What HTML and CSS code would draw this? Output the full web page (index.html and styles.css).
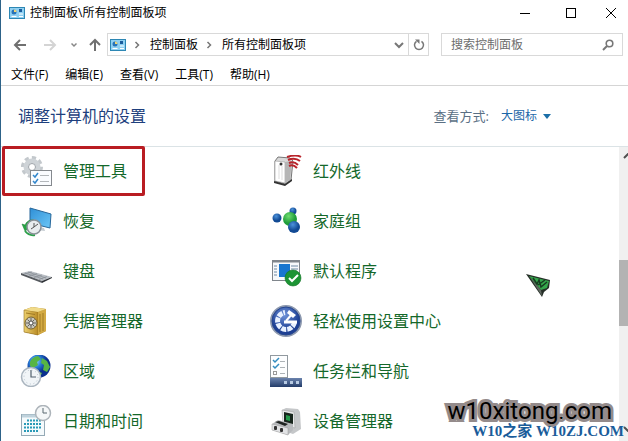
FILE: index.html
```html
<!DOCTYPE html>
<html lang="zh-CN">
<head>
    <meta charset="UTF-8">
    <meta name="viewport" content="width=device-width, initial-scale=1.0">
    <title>控制面板\所有控制面板项</title>
    <link rel="stylesheet" href="styles.css">
</head>
<body>

<!-- Shared symbols -->
<svg class="symbols" aria-hidden="true">
    <symbol id="panel" viewBox="0 0 16 12">
        <rect x="0.5" y="0.5" width="15" height="11" fill="#8fd0f2" stroke="#2d87b4"/>
        <circle cx="5" cy="5" r="2.5" fill="#2873b8"/>
        <path d="M5 5V2.5A2.5 2.5 0 0 1 7.5 5z" fill="#f4d774"/>
        <path d="M2.5 9.5h5M10 7h4M10 9.500h4" stroke="#fff"/>
        <rect x="10" y="2" width="3" height="3" fill="#1c5d9c"/>
    </symbol>
    <linearGradient id="gold" x2="1"><stop stop-color="#ecd06e"/><stop offset="1" stop-color="#b98b25"/></linearGradient>
    <linearGradient id="screen" x2="1" y2="1"><stop stop-color="#2f8fd6"/><stop offset="1" stop-color="#6cc7f7"/></linearGradient>
    <linearGradient id="bar" y2="1" x2="0"><stop stop-color="#6b83ad"/><stop offset="1" stop-color="#233c69"/></linearGradient>
    <radialGradient id="globe" cx="0.35" cy="0.3"><stop stop-color="#9be0ff"/><stop offset="0.5" stop-color="#2a7fd8"/><stop offset="1" stop-color="#0a2f8e"/></radialGradient>
    <radialGradient id="ease" cx="0.45" cy="0.3"><stop stop-color="#6f93da"/><stop offset="1" stop-color="#1d3f93"/></radialGradient>
    <radialGradient id="green" cx="0.4" cy="0.3"><stop stop-color="#6fdc70"/><stop offset="1" stop-color="#1f9c3a"/></radialGradient>
    <radialGradient id="blue" cx="0.4" cy="0.3"><stop stop-color="#4c93dc"/><stop offset="1" stop-color="#124a94"/></radialGradient>
</svg>

<div class="window">
    <!-- Title bar -->
    <header class="title-bar">
        <svg class="panel-icon"><use href="#panel"/></svg>
        <h1 class="title">控制面板\所有控制面板项</h1>
        <div class="window-buttons">
            <button aria-label="最小化"><svg width="12" height="12" viewBox="0 0 12 12"><path d="M1 6.500h10" stroke="#000"/></svg></button>
            <button aria-label="最大化"><svg width="12" height="12" viewBox="0 0 12 12"><rect x="1.500" y="1.500" width="9" height="9" fill="none" stroke="#000"/></svg></button>
            <button aria-label="关闭"><svg width="12" height="12" viewBox="0 0 12 12"><path d="M1 1l10 10M11 1L1 11" stroke="#000"/></svg></button>
        </div>
    </header>

    <!-- Navigation and search -->
    <div class="nav-bar">
        <div class="nav-buttons">
            <button class="nav-back" aria-label="后退"><svg width="14" height="12" viewBox="0 0 14 12"><path d="M13 6H2M7 1L2 6l5 5" fill="none" stroke="#707070" stroke-width="2"/></svg></button>
            <button class="nav-forward" aria-label="前进"><svg width="14" height="12" viewBox="0 0 14 12"><path d="M1 6h11M7 1l5 5-5 5" fill="none" stroke="#d4d4d4" stroke-width="2"/></svg></button>
            <button class="nav-recent" aria-label="最近"><svg width="6" height="6" viewBox="0 0 6 6"><path d="M0.500 1.500L3 4l2.500-2.500" fill="none" stroke="#888" stroke-width="1.500"/></svg></button>
            <button class="nav-up" aria-label="向上"><svg width="12" height="14" viewBox="0 0 12 14"><path d="M6 13V2M1 7l5-5 5 5" fill="none" stroke="#707070" stroke-width="2"/></svg></button>
        </div>
        <nav class="address">
            <svg class="panel-icon"><use href="#panel"/></svg>
            <svg class="crumb-arrow" viewBox="0 0 6 8"><path d="M1.500 1l3 3-3 3" fill="none" stroke="#777" stroke-width="1.500"/></svg>
            <a href="#">控制面板</a>
            <svg class="crumb-arrow" viewBox="0 0 6 8"><path d="M1.500 1l3 3-3 3" fill="none" stroke="#777" stroke-width="1.500"/></svg>
            <a href="#">所有控制面板项</a>
            <button class="address-drop" aria-label="展开"><svg width="10" height="8" viewBox="0 0 10 8"><path d="M1 2l4 4 4-4" fill="none" stroke="#777" stroke-width="2"/></svg></button>
            <button class="refresh" aria-label="刷新"><svg width="12" height="12" viewBox="0 0 12 12"><path d="M8.500 2.300A4.500 4.500 0 1 1 3.500 2.300" fill="none" stroke="#777" stroke-width="1.500"/><path d="M2 0.500h4.500V5z" fill="#777"/></svg></button>
        </nav>
        <form class="search">
            <input type="text" aria-label="搜索控制面板" placeholder="搜索控制面板">
            <svg width="12" height="12" viewBox="0 0 12 12"><circle cx="7.500" cy="4.500" r="3.300" fill="none" stroke="#777" stroke-width="1.600"/><path d="M5 7l-4 4" stroke="#777" stroke-width="2"/></svg>
        </form>
    </div>

    <!-- Menu -->
    <div class="menu-bar">
        <button>文件(F)</button>
        <button>编辑(E)</button>
        <button>查看(V)</button>
        <button>工具(T)</button>
        <button>帮助(H)</button>
    </div>

    <div class="heading">
        <h2>调整计算机的设置</h2>
        <label for="view-mode">查看方式:</label>
        <div class="view-select">
            <select id="view-mode">
                <option>大图标</option>
                <option>类别</option>
                <option>小图标</option>
            </select>
            <svg width="8" height="5" viewBox="0 0 8 5"><path d="M0 0h8L4 5z" fill="#1b6fa8"/></svg>
        </div>
    </div>

    <div class="content">
        <main class="items">
            <a class="item marked" href="#">
                <svg viewBox="0 0 32 32">
                    <circle cx="12" cy="12" r="9" fill="none" stroke="#c3c8cc" stroke-width="4" stroke-dasharray="4 3"/>
                    <circle cx="12" cy="12" r="6" fill="none" stroke="#ced3d7" stroke-width="5"/>
                    <circle cx="12" cy="12" r="3.500" fill="#fff" stroke="#9da3a9"/>
                    <rect x="10.500" y="15.500" width="21" height="15" fill="#fafcff" stroke="#85898e"/>
                    <path d="M13 20l2 2 3-4M13 26l2 2 3-4" fill="none" stroke="#3387cc" stroke-width="1.500"/>
                    <path d="M20 20.500h9M20 26.500h9" stroke="#b3b7bb"/>
                </svg>
                <span>管理工具</span>
            </a>
            <a class="item" href="#">
                <svg viewBox="0 0 32 32">
                    <path d="M5 6l3-4 12 1 3 3-2 19-6 4-10-3z" fill="#d9d9d9" stroke="#777"/>
                    <path d="M5 6l10 1v21l-10-2z" fill="#fff" stroke="#999" stroke-width="0.600"/>
                    <path d="M15 7l7-1-2 19-5 3z" fill="#b5b5b5"/>
                    <path d="M9 10v14M12 11v14" stroke="#ddd"/>
                    <circle cx="11" cy="9" r="1.500" fill="#333"/>
                    <path d="M4 26l11 3 7-5v2l-7 5-11-3z" fill="#333"/>
                    <path d="M17 2Q26-1 31 2M18 5Q25 2 30 6M19 8Q24 6 28 10M19 11Q23 9 27 13" fill="none" stroke="#b9242b" stroke-width="2"/>
                </svg>
                <span>红外线</span>
            </a>
            <a class="item" href="#">
                <svg viewBox="0 0 32 32">
                    <path d="M10 3l21 6-1 14-20-5z" fill="url(#screen)" stroke="#28679a"/>
                    <path d="M19 22l5 1 1 3-8-1z" fill="#c4cbd0"/>
                    <path d="M14 15a8 8 0 0 0-9 5l-3-1 3 7 6-4-3-1a6 6 0 0 1 6-3z" fill="#27a544" stroke="#137b2b" stroke-width="0.500"/>
                    <path d="M5 26q4 5 10 4" fill="none" stroke="#2ca04b" stroke-width="2"/>
                    <circle cx="14" cy="22" r="7" fill="#e9edef" stroke="#899198" stroke-width="1.500"/>
                    <path d="M14 18v4l-3 2M14 22l4-3" fill="none" stroke="#555"/>
                </svg>
                <span>恢复</span>
            </a>
            <a class="item" href="#">
                <svg viewBox="0 0 32 32">
                    <circle cx="23" cy="6" r="3.500" fill="url(#blue)"/>
                    <circle cx="7" cy="13" r="4.500" fill="url(#blue)"/>
                    <circle cx="20" cy="14" r="7" fill="url(#green)"/>
                    <circle cx="24" cy="22" r="6" fill="url(#blue)"/>
                </svg>
                <span>家庭组</span>
            </a>
            <a class="item" href="#">
                <svg viewBox="0 0 32 32">
                    <path d="M1 18l9-2 22 6-10 4z" fill="#b9bec4"/>
                    <path d="M1 18l21 8v2L1 20z" fill="#55595e"/>
                    <path d="M22 26l10-4v1l-10 5z" fill="#303338"/>
                    <path d="M5 18l18 6M8 17l18 6M4 19l8-2M9 21l8-2.500M14 22.500l8-2.500M19 24.500l8-3" stroke="#878c93" stroke-width="0.700"/>
                </svg>
                <span>键盘</span>
            </a>
            <a class="item" href="#">
                <svg viewBox="0 0 32 32">
                    <rect x="2.500" y="5.500" width="27" height="20" fill="#f7f9fb" stroke="#80868c"/>
                    <path d="M2 6.500h28" stroke="#80868c" stroke-width="2"/>
                    <path d="M4 11h3M4 14h3M4 17h3M4 20h3M21 11h7M21 14h7" stroke="#6f8aa5"/>
                    <rect x="9" y="9" width="11" height="13" fill="#1976cf"/>
                    <circle cx="23" cy="23" r="8" fill="#1c9434" stroke="#137327" stroke-width="0.600"/>
                    <path d="M19 23l3 3 6-6" fill="none" stroke="#fff" stroke-width="2"/>
                </svg>
                <span>默认程序</span>
            </a>
            <a class="item" href="#">
                <svg viewBox="0 0 32 32">
                    <path d="M4 5l8-3 14 2v22l-8 4-14-3z" fill="#a87b20"/>
                    <path d="M4 5l14 2v23L4 27z" fill="url(#gold)" stroke="#96701f" stroke-width="0.600"/>
                    <path d="M18 7l8-3v22l-8 4z" fill="#d3aa43"/>
                    <path d="M4 5l8-3 14 2-8 3z" fill="#f1db8a"/>
                    <path d="M6 8l9 1.500M20 9v18M23 8v18" stroke="#a17a25"/>
                    <circle cx="11" cy="18" r="6" fill="#c9c7bd" stroke="#75622f"/>
                    <path d="M11 13v10M6 18h10M7.500 14.500l7 7M14.500 14.500l-7 7" stroke="#66655f"/>
                    <circle cx="11" cy="18" r="2" fill="#fff" stroke="#555"/>
                </svg>
                <span>凭据管理器</span>
            </a>
            <a class="item" href="#">
                <svg viewBox="0 0 32 32">
                    <circle cx="16" cy="16" r="15" fill="url(#ease)" stroke="#8c98ae" stroke-width="2"/>
                    <circle cx="16" cy="16" r="14" fill="none" stroke="#25458f"/>
                    <path d="M24.500 17a8.500 8.500 0 1 1-9.500-9.500" fill="none" stroke="#e9f1ff" stroke-width="5" stroke-dasharray="5 1"/>
                    <path d="M16 16l6-7" fill="none" stroke="#fff" stroke-width="2"/>
                    <path d="M14 17h13" stroke="#fff" stroke-width="3"/>
                    <path d="M19 5l7 5-3 3-6-5z" fill="#fff"/>
                </svg>
                <span>轻松使用设置中心</span>
            </a>
            <a class="item" href="#">
                <svg viewBox="0 0 32 32">
                    <circle cx="19" cy="11" r="11.500" fill="url(#globe)"/>
                    <path d="M10 7q2-5 8-6l3 3-4 3 1 3-5 3-3-2zM22 3l5 3 3 6-3 5-4-2 1-5-3-2zM17 16l5 2-2 4-4-2z" fill="#57b544"/>
                    <circle cx="11" cy="22" r="9.500" fill="#f1f5f8" stroke="#aab5bf" stroke-width="1.500"/>
                    <path d="M11 15v7h5" fill="none" stroke="#52616e" stroke-width="1.200"/>
                    <circle cx="11" cy="22" r="7" fill="none" stroke="#b5c1cb" stroke-dasharray="1 2.700"/>
                </svg>
                <span>区域</span>
            </a>
            <a class="item" href="#">
                <svg viewBox="0 0 32 32">
                    <rect x="0.500" y="0.500" width="17" height="22" fill="#fdfeff" stroke="#91999f"/>
                    <path d="M3 5l2 2 4-4M3 11l2 2 4-4" fill="none" stroke="#328cc0" stroke-width="1.500"/>
                    <rect x="3.500" y="16.500" width="3" height="3" fill="none" stroke="#999"/>
                    <path d="M10 6.500h5M10 12.500h5M10 18.500h5" stroke="#adb3b7"/>
                    <rect y="23" width="32" height="9" fill="url(#bar)"/>
                    <path d="M14 27.500h3M20 27.500h3M26 27.500h3" stroke="#b7cae2" stroke-width="3"/>
                </svg>
                <span>任务栏和导航</span>
            </a>
            <a class="item" href="#">
                <svg viewBox="0 0 32 32">
                    <rect x="1.500" y="9.500" width="23" height="21" fill="#f5fafc" stroke="#95aab6"/>
                    <path d="M2 11h22" stroke="#bfd2dc" stroke-width="3"/>
                    <path d="M7 15.500h15M4 19h18M4 22.500h18M4 26h14" stroke="#2a9ab7" stroke-width="2" stroke-dasharray="2 1"/>
                    <circle cx="23" cy="8" r="7.500" fill="#f5f7f8" stroke="#adb4ba" stroke-width="1.500"/>
                    <path d="M23 3v5h4" fill="none" stroke="#5b6870"/>
                </svg>
                <span>日期和时间</span>
            </a>
            <a class="item" href="#">
                <svg viewBox="0 0 32 32">
                    <path d="M12 5l4-2 12 1 2 3 1 17-8 5-9-3z" fill="#c5c7c9"/>
                    <path d="M12 5l12 2 1 16-12-3z" fill="#e9eaeb" stroke="#999" stroke-width="0.500"/>
                    <path d="M14 7l9 2v11l-9-2z" fill="#17251c"/>
                    <path d="M16 10l4 1v5l-4-1z" fill="#24994a"/>
                    <path d="M2 19l6-4 15 4v6l-5 5-16-5z" fill="#b8babd"/>
                    <path d="M2 19l16 4v7L2 25z" fill="#e2e3e5" stroke="#999" stroke-width="0.500"/>
                    <path d="M5 17l4-1 9 3-3 2z" fill="#202422"/>
                    <rect x="4" y="21" width="3" height="4" rx="1" fill="#333"/>
                    <rect x="10" y="23" width="3" height="4" rx="1" fill="#333"/>
                </svg>
                <span>设备管理器</span>
            </a>
        </main>
        <div class="scrollbar">
            <svg class="scroll-arrow" viewBox="0 0 10 6"><path d="M1 5l4-4 4 4" fill="none" stroke="#505050" stroke-width="2"/></svg>
            <div class="thumb"></div>
            <svg class="scroll-arrow" viewBox="0 0 10 6"><path d="M1 1l4 4 4-4" fill="none" stroke="#505050" stroke-width="2"/></svg>
        </div>
    </div>

    <!-- Pointer and watermark over the list -->
    <svg class="pointer" viewBox="0 0 26 26">
        <path d="M0 1l24 6-1 8-5 4-2 5z" fill="#252e27"/>
        <path d="M3 3l20 5-2 7-6 2z" fill="#35a64b"/>
        <path d="M3 3l12 14 1 6z" fill="#606861"/>
        <path d="M7 5l4 6 2-4 2 7 6-5M12 12l7-5" fill="none" stroke="#163b20" stroke-width="1.500"/>
    </svg>
    <div class="watermark">
        <div class="mark-site">w10xitong.com</div>
        <div class="mark-home">W10之家 W10ZJ.COM</div>
    </div>
</div>

</body>
</html>
```

FILE: styles.css
```css
*,
*::after {
    box-sizing: border-box;
}

body {
    margin: 0;
    font-family: "Open Sans", "Noto Sans CJK SC", sans-serif;
    font-size: 12px;
    line-height: 16px;
    color: #000;
    background-color: #fff;
}

h1, h2 {
    margin: 0;
    font-weight: normal;
}

button, input, select {
    font: inherit;
    color: inherit;
    padding: 0;
    border: none;
    background: none;
}

svg {
    display: block;
    flex-shrink: 0;
}

a {
    color: inherit;
    text-decoration: none;
}

.symbols {
    position: absolute;
    width: 0;
    height: 0;
}

.window {
    position: relative;
    display: flex;
    flex-direction: column;
    height: 100vh;
    overflow: hidden;
    border-left: 1px solid #2d6288;
}

.panel-icon {
    width: 16px;
    height: 12px;
}

/* Title bar */
.title-bar {
    display: flex;
    align-items: center;
    height: 25px;
    padding-left: 8px;
}

.title {
    margin-left: 5px;
    font-size: 12px;
}

.window-buttons {
    display: flex;
    margin-left: auto;
}

.window-buttons button {
    display: flex;
    align-items: center;
    justify-content: center;
    width: 46px;
    height: 24px;
}

.window-buttons button:last-child {
    width: 34px;
}

.window-buttons button:hover {
    background-color: #e5e5e5;
}

/* Navigation */
.nav-bar {
    display: flex;
    height: 39px;
    padding: 8px 5px 8px 12px;
}

.nav-buttons {
    display: flex;
    align-items: center;
    width: 94px;
}

.nav-forward {
    margin-left: 16px;
}

.nav-recent {
    margin-left: 14px;
}

.nav-up {
    margin-left: 12px;
}

.address {
    display: flex;
    flex: 1;
    align-items: center;
    padding-left: 2px;
    border: 1px solid #d9d9d9;
}

.crumb-arrow {
    width: 6px;
    height: 8px;
    margin: 0 10px 0 8px;
}

.address-drop {
    margin-left: auto;
    padding: 0 4px;
}

.refresh {
    display: flex;
    align-items: center;
    justify-content: center;
    width: 20px;
    height: 100%;
    border-left: 1px solid #d9d9d9;
}

.search {
    display: flex;
    align-items: center;
    width: 182px;
    margin-left: 12px;
    padding: 0 8px 0 9px;
    border: 1px solid #d9d9d9;
}

.search input {
    flex: 1;
    min-width: 0;
    outline: none;
}

.search input::placeholder {
    color: #6d6d6d;
    opacity: 1;
}

/* Menu */
.menu-bar {
    display: flex;
    gap: 17px;
    height: 22px;
    padding-left: 10px;
    border-bottom: 1px solid #d5d5d5;
}

.heading {
    display: flex;
    align-items: center;
    height: 61px;
    padding: 0 77px 0 17px;
    border-bottom: 1px solid #dbe3e6;
}

.heading h2 {
    margin-right: auto;
    font-size: 16px;
    line-height: 24px;
    color: #1e3f7d;
}

.heading label {
    font-size: 13px;
    color: #5a6f84;
}

.view-select {
    display: flex;
    align-items: center;
    gap: 5px;
    margin-left: 12px;
    color: #1b66a8;
}

.view-select select {
    width: 37px;
    appearance: none;
    outline: none;
}

/* Item list */
.content {
    display: flex;
    flex: 1;
    min-height: 0;
}

.items {
    display: grid;
    flex: 1;
    grid-template-columns: 250px 1fr;
    grid-auto-rows: 48px;
    row-gap: 2px;
    padding-left: 19px;
}

.item {
    position: relative;
    display: flex;
    align-items: center;
    gap: 11px;
    font-size: 16px;
    line-height: 24px;
    color: #14682a;
}

.item svg {
    width: 32px;
    height: 32px;
}

.item:hover span {
    text-decoration: underline;
}

/* Red frame round the item */
.marked::after {
    content: "";
    position: absolute;
    top: -1px;
    left: -18px;
    width: 143px;
    height: 50px;
    border: 3px solid #b91c22;
    border-radius: 2px;
}

.scrollbar {
    display: flex;
    flex-direction: column;
    justify-content: space-between;
    width: 9px;
    padding: 6px 0 9px;
    overflow: hidden;
    background-color: #f0f0f0;
}

.scroll-arrow {
    width: 10px;
    height: 6px;
    margin-left: 4px;
}

.thumb {
    height: 66px;
    background-color: #b3b3b3;
}

/* Overlays */
.pointer {
    position: absolute;
    left: 525px;
    top: 273px;
    width: 26px;
    height: 26px;
}

.watermark {
    position: absolute;
    right: 4px;
    bottom: 2px;
    text-align: right;
}

.mark-site {
    margin-right: 12px;
    font-family: "Liberation Sans Narrow", Roboto, sans-serif;
    font-size: 24px;
    line-height: 24px;
    color: #000;
    -webkit-text-stroke: 6px #948b8b;
    paint-order: stroke fill;
}

.mark-home {
    position: relative;
    font-family: "Liberation Serif", "Noto Sans CJK SC", serif;
    font-size: 15px;
    font-weight: bold;
    color: #1a5c9a;
}
```
